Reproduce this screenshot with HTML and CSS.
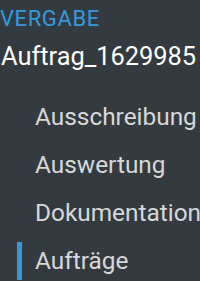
FILE: index.html
```html
<!DOCTYPE html>
<html lang="de">
<head>
    <meta charset="UTF-8">
    <meta name="viewport" content="width=device-width, initial-scale=1.0">
    <title>Vergabe</title>
    <link rel="stylesheet" href="styles.css">
</head>
<body>
    <div class="sidebar">
        <div class="sidebar-head">
            <div class="section-label">VERGABE</div>
            <div class="project-name">Auftrag_1629985</div>
        </div>
        <ul class="nav">
            <li class="nav-item">Ausschreibung</li>
            <li class="nav-item">Auswertung</li>
            <li class="nav-item">Dokumentation</li>
            <li class="nav-item active">Aufträge</li>
        </ul>
    </div>
</body>
</html>
```

FILE: styles.css
```css
html, body {
    margin: 0;
    padding: 0;
    background-color: #343b40;
}

.sidebar {
    width: 200px;
    height: 281px;
    overflow: hidden;
    font-family: Roboto, "Noto Sans", sans-serif;
    white-space: nowrap;
}

.sidebar-head {
    padding-top: 7px;
}

.section-label {
    color: #3399dd;
    font-size: 22px;
    line-height: 24px;
    letter-spacing: 0.6px;
}

.project-name {
    color: #ffffff;
    font-size: 25.4px;
    line-height: 30px;
    margin-top: 10.3px;
    padding-left: 1px;
}

.nav {
    list-style: none;
    margin: 21.3px 0 0 0;
    padding: 0;
}

.nav-item {
    position: relative;
    color: #d6d8d9;
    font-size: 24.4px;
    line-height: 48.3px;
    padding-left: 35px;
}

/* blue marker on the current page */
.nav-item.active::before {
    content: "";
    position: absolute;
    left: 17px;
    top: 5px;
    width: 4.5px;
    height: 38px;
    background-color: #3399dd;
}
```
